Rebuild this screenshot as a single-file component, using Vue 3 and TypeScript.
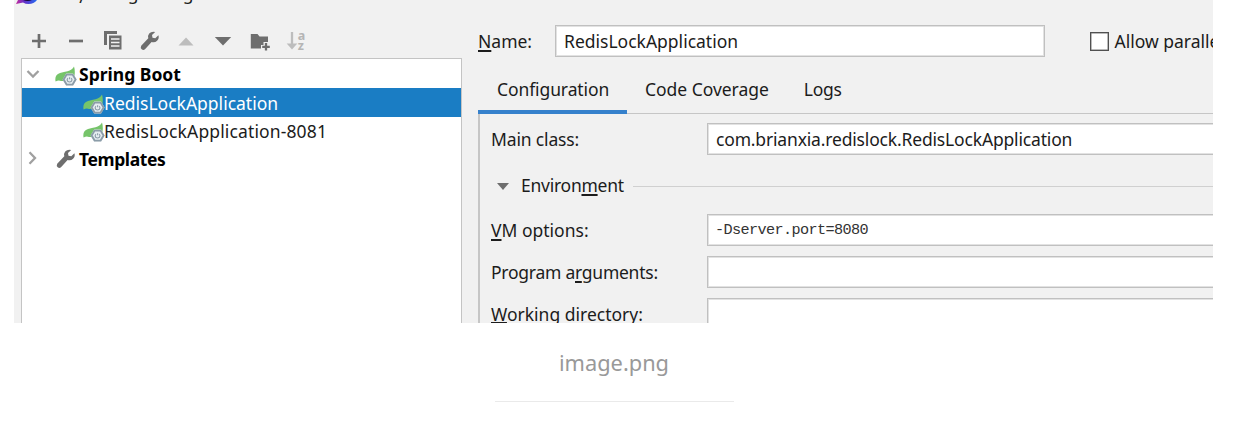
<script setup lang="ts">
interface Field {
  before: string
  key: string
  after: string
  value: string
  cls: string
}
const fields: Field[] = [
  { before: '', key: 'V', after: 'M options:', value: '-Dserver.port=8080', cls: 'vm' },
  { before: 'Program a', key: 'r', after: 'guments:', value: '', cls: 'args' },
  { before: '', key: 'W', after: 'orking directory:', value: '', cls: 'dir' },
]
const configs = [
  { name: 'RedisLockApplication', selected: true, cls: 'first' },
  { name: 'RedisLockApplication-8081', selected: false, cls: 'second' },
]
const tabs = [
  { name: 'Configuration', cls: 'tab-config' },
  { name: 'Code Coverage', cls: 'tab-cover' },
  { name: 'Logs', cls: 'tab-logs' },
]
</script>

<template>
  <main class="page">
    <svg class="defs" width="0" height="0" aria-hidden="true">
      <symbol id="wrench" viewBox="0 0 20 20">
        <path d="M18.4 4.2 15.3 7.3 12.5 6.7 12 4.1 15.2 1 Q11.5 .1 9.2 2.5 Q7.5 4.6 8.3 7.2 L1.2 14.7 Q.1 17 1.7 18.3 Q3.4 19.7 5 18.2 L11.6 10.9 Q14.7 11.9 17.1 9.7 Q19.5 7.3 18.4 4.2Z" fill="#6e6e6e" />
      </symbol>
      <symbol id="leaf" viewBox="0 0 22 20">
        <path d="M.6 15.5 Q-.8 9 5 7 Q9 6 12.5 5.3 Q17 4.2 19 .6 Q20.4 5 19.4 10 L17 15 H6 Q3.5 14 .6 15.5Z" fill="#76c46a" />
        <path d="M11.2 7.6H18L21.6 13.6 18 19.6H11.2L7.6 13.6Z" fill="#e5edf0" />
        <path d="M11.6 8.6H17.6L20.6 13.6 17.6 18.6H11.6L8.6 13.6Z" fill="#e5edf0" stroke="#8b9ca8" stroke-width="1.9" />
        <path d="M12.9 12.1 Q11.4 13.6 12.7 15.3 Q14.6 16.7 16.4 15.3 Q17.7 13.6 16.3 12.1 M14.6 11.3V13.3" fill="none" stroke="#8b9ca8" stroke-width="1.1" />
      </symbol>
    </svg>

    <section class="window">
      <header class="titlebar">
        <svg class="logo" width="24" height="5" viewBox="0 0 24 5">
          <defs>
            <linearGradient id="brand"><stop offset="0" stop-color="#c52b9c" /><stop offset=".4" stop-color="#6430c8" /><stop offset="1" stop-color="#246cf2" /></linearGradient>
          </defs>
          <path d="M3 0H22Q19 4 13.5 4 10.5 4 8 2.5L1 4Z" fill="url(#brand)" />
          <path d="M8 0H17Q13 2 8 0Z" fill="#160737" />
        </svg>
        <span class="title">Run<span class="slash">/</span>Debug Configurations</span>
      </header>

      <div class="body">
        <aside class="sidebar">
          <nav class="toolbar">
            <svg viewBox="0 0 22 22"><path d="M11 4V18M4 11H18" stroke="#6e6e6e" stroke-width="2.7" /></svg>
            <svg viewBox="0 0 22 22"><path d="M4 11H18" stroke="#6e6e6e" stroke-width="2.7" /></svg>
            <svg viewBox="0 0 22 22"><path d="M2 1H15V4H5V15H2Z M7 5.5H19.5V19.5H7Z" fill="#6e6e6e" /><path d="M9 9H17.5M9 12.5H17.5M9 16H17.5" stroke="#f1f1f1" stroke-width="1.5" /></svg>
            <svg viewBox="0 0 22 22"><use href="#wrench" x="1" y="1" width="20" height="20" /></svg>
            <svg viewBox="0 0 22 22"><path d="M3.5 15.5 11 7.5 18.5 15.5Z" fill="#bdbdbd" /></svg>
            <svg viewBox="0 0 22 22"><path d="M2.8 7H19.2L11 15.5Z" fill="#6e6e6e" /></svg>
            <svg viewBox="0 0 22 22"><path d="M1.8 4H8.5L10.5 6.5H19V12H14.5V15H12V18.5H1.8Z" fill="#6e6e6e" /><path d="M17 13V20.5M13.2 16.8H20.8" stroke="#6e6e6e" stroke-width="2.3" /></svg>
            <svg class="sort" viewBox="0 0 22 22"><path d="M6 2V15" stroke="#bdbdbd" stroke-width="2.3" /><path d="M.7 13.5H11.3L6 19.5Z" fill="#bdbdbd" /><text x="11.7" y="9.5">a</text><text x="11.8" y="20">z</text></svg>
          </nav>

          <div class="tree">
            <div class="row">
              <svg class="chevron" viewBox="0 0 14 14"><path d="M1.5 4 7 9.5 12.5 4" fill="none" stroke="#a0a0a0" stroke-width="2.3" /></svg>
              <svg class="leaf"><use href="#leaf" /></svg>
              <b class="boot">Spring Boot</b>
            </div>
            <div v-for="c in configs" :key="c.name" class="row child" :class="{ selected: c.selected }">
              <svg class="leaf"><use href="#leaf" /></svg>
              <span :class="c.cls">{{ c.name }}</span>
            </div>
            <div class="row">
              <svg class="chevron" viewBox="0 0 14 14"><path d="M3.5 1.3 9 7 3.5 12.7" fill="none" stroke="#a0a0a0" stroke-width="2.3" /></svg>
              <svg class="leaf wrench"><use href="#wrench" /></svg>
              <b class="templates">Templates</b>
            </div>
          </div>
        </aside>

        <section class="editor">
          <div class="name-row">
            <label class="name-label"><u>N</u>ame:</label>
            <div class="input name-input"><span>RedisLockApplication</span></div>
            <i class="checkbox"></i>
            <span class="parallel">Allow parallel run</span>
          </div>
          <nav class="tabs">
            <div v-for="(t, i) in tabs" :key="t.name" class="tab" :class="{ active: i === 0 }"><span :class="t.cls">{{ t.name }}</span></div>
          </nav>
          <div class="panel">
            <div class="field main-field">
              <label><span class="main-label">Main class:</span></label>
              <div class="input"><span class="main-value">com.brianxia.redislock.RedisLockApplication</span></div>
            </div>
            <div class="group">
              <svg width="14" height="9" viewBox="0 0 14 9"><path d="M1 1H13L7 8Z" fill="#6e6e6e" /></svg>
              <span class="env">Environ<u>m</u>ent</span>
              <hr />
            </div>
            <div v-for="f in fields" :key="f.cls" class="field">
              <label><span :class="f.cls">{{ f.before }}<u>{{ f.key }}</u>{{ f.after }}</span></label>
              <div class="input"><span class="mono">{{ f.value }}</span></div>
            </div>
          </div>
        </section>
      </div>
    </section>
    <footer class="caption"><span>image.png</span></footer>
  </main>
</template>

<style>
body { margin: 0; background: #fff; }
</style>
<style scoped>
.page { width: 1246px; height: 427px; overflow: hidden; background: #fff; color: #1c1c1c; font: 17.5px/28px "Noto Sans", "Open Sans", sans-serif; white-space: nowrap; }
.page * { box-sizing: border-box; }
.defs { display: block; height: 0; }
.window { width: 1199px; height: 323px; margin-left: 14px; overflow: hidden; background: #f1f1f1; }
.titlebar { display: flex; height: 25px; }
.logo { display: block; margin-left: 1px; }
.title { margin: -21px 0 0 9px; height: 28px; letter-spacing: -.45px; }
.slash { display: inline-block; transform: translateY(3px); }
.body { display: flex; align-items: flex-start; }
.sidebar { width: 441px; margin-left: 7px; }
.toolbar { display: flex; gap: 14.8px; height: 33px; padding: 5px 0 0 7.3px; }
.toolbar svg { width: 22px; height: 22px; flex: none; overflow: visible; }
.sort text { fill: #b5b5b5; font: bold 12.5px "Noto Sans", sans-serif; }
.tree { height: 300px; border: 1px solid #c4c4c4; border-width: 1px 1px 0; background: #fff; padding-top: 1.4px; }
.row { display: flex; align-items: center; height: 28.1px; padding-left: 4px; color: #000; }
.row b { font-weight: 700; }
.boot { margin-top: -1px; }
.templates { letter-spacing: -.4px; }
.chevron { width: 14px; height: 14px; flex: none; margin: -1px 15px 0 0; }
.leaf { width: 22px; height: 20px; flex: none; margin: 3px 2px 0 0; }
.wrench { margin-top: 0; }
.child { padding-left: 61px; color: #1c1c1c; }
.child .leaf { margin-right: -1px; }
.second { letter-spacing: .13px; }
.row.selected { background: #1a7dc4; color: #fff; }
.editor { flex: 1; min-width: 0; margin-left: 16px; }
.name-row { display: flex; align-items: center; height: 32px; }
.name-label { width: 77px; flex: none; }
u { text-decoration-thickness: 1.5px; text-underline-offset: 2px; text-decoration-skip-ink: none; }
.dir u { text-underline-offset: 1px; }
.input { display: flex; align-items: center; height: 32px; background: #fff; border: 1px solid #c0c0c0; box-shadow: inset 0 0 0 1px #e2e2e2; padding-left: 8px; }
.name-input { width: 490px; flex: none; }
.checkbox { width: 19px; height: 19px; flex: none; margin: 0 6px 0 44.5px; border: 1px solid #505050; box-shadow: inset 0 0 0 .5px #777; background: #fff; }
.tabs { display: flex; height: 57px; padding-top: 9px; border-bottom: 1px solid #c6c6c6; }
.tab { height: 48px; padding: 9px 17px 0 18px; }
.tab.active { width: 149px; padding-left: 19px; border-bottom: 4px solid #3681cc; }
.tab-config { letter-spacing: -.1px; }
.tab-cover { letter-spacing: -.03px; }
.tab-logs { letter-spacing: -.3px; }
.panel { height: 230px; border-left: 2px solid #c6c6c6; padding-top: 9px; }
.field { display: grid; grid-template-columns: 216px 1fr; align-items: center; height: 32px; margin-bottom: 10px; padding-left: 11px; }
.field .input { border-right: 0; margin-right: -2px; }
.main-label { letter-spacing: -.15px; }
.main-value { letter-spacing: -.17px; }
.args { letter-spacing: -.25px; }
.main-field { margin-bottom: 0; }
.group { display: flex; align-items: center; height: 59px; padding: 3px 0 0 16px; }
.env { margin-left: 11px; letter-spacing: -.25px; height: 30px; }
.group hr { flex: 1; height: 1px; margin: 0 0 0 9px; border: 0; background: #d0d0d0; }
.mono { font: 15.2px/24px "Liberation Mono", monospace; letter-spacing: -.62px; color: #333; margin-left: -1px; }
.caption { width: 239px; height: 79px; margin: 0 auto; padding-top: 26px; position: relative; left: -9px; border-bottom: 1px solid #eaeaea; text-align: center; font-size: 21.8px; color: #999; }
</style>
